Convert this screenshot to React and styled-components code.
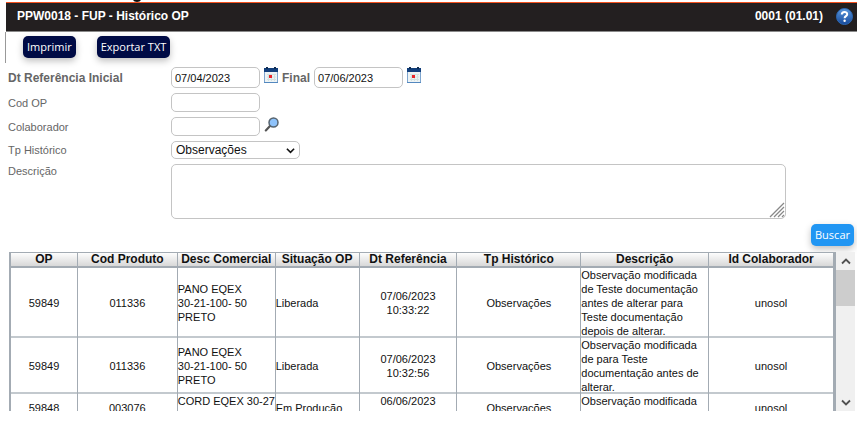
import React, { useRef } from "react";
import styled, { createGlobalStyle } from "styled-components";

const GlobalStyle = createGlobalStyle`
  * { box-sizing: border-box; }
  body {
    margin: 0;
    background: #fff;
    color: #111;
    font: 11px/14px "Liberation Sans", Arial, sans-serif;
  }
`;

const Page = styled.main`
  padding: 2px 0 12px 5px;
`;

const HeadingTail = styled.svg`
  position: absolute;
  top: 0;
  left: 132px;
`;

const TitleBar = styled.header`
  display: flex;
  align-items: center;
  gap: 13px;
  height: 30px;
  margin-left: 1px;
  padding: 0 4px 2px 11px;
  background: #231f20;
  border-top: 1px solid #f4511e;
  border-bottom: 1px solid #8a8a8a;
  color: #fff;
`;

const Title = styled.h1`
  flex: 1;
  margin: 0;
  font-size: 12px;
  line-height: 14px;
`;

const Version = styled.span`
  font-size: 12px;
  font-weight: bold;
`;

const IconButton = styled.button`
  display: flex;
  padding: 0;
  border: 0;
  background: none;
  cursor: pointer;
`;

const Toolbar = styled.div`
  display: flex;
  gap: 21px;
  height: 31px;
  padding: 4px 17px 0;
  border-left: 1px solid #999;
`;

const Button = styled.button`
  height: 22px;
  padding: 0 4px;
  border: 0;
  border-radius: 5px;
  background: ${(p) => (p.$primary ? "#2196f3" : "#000b45")};
  color: #fff;
  font: 11px/16px "Open Sans", sans-serif;
  box-shadow: 0 3px 7px rgba(0, 0, 0, 0.25);
  cursor: pointer;
`;

const Form = styled.form`
  display: grid;
  gap: 5px;
  padding: 4px 71px 0 3px;
`;

const Row = styled.div`
  display: grid;
  grid-template-columns: 163px 1fr;
  align-items: ${(p) => (p.$top ? "start" : "center")};
`;

const Label = styled.label`
  color: #666;
  font-size: ${(p) => (p.$strong ? 12 : 11)}px;
  font-weight: ${(p) => (p.$strong ? "bold" : "normal")};
`;

const Controls = styled.div`
  display: flex;
  align-items: center;
  gap: 4px;
  ${IconButton} { align-self: flex-start; }
`;

const Input = styled.input`
  width: 89px;
  height: ${(p) => (p.$tall ? 21 : 19)}px;
  padding: 1px 3px 0;
  border: 1px solid #c4c4c4;
  border-radius: 5px;
  background: #fff;
  color: #111;
  font: inherit;
`;

const SelectBox = styled.div`
  position: relative;
  svg {
    position: absolute;
    right: 5px;
    top: 6px;
    pointer-events: none;
  }
`;

const Select = styled.select`
  display: block;
  appearance: none;
  width: 129px;
  height: 18px;
  padding: 0 4px;
  border: 1px solid #c4c4c4;
  border-radius: 5px;
  background: #fff;
  color: #111;
  font: inherit;
  font-size: 12px;
`;

const TextBox = styled.div`
  position: relative;
  svg {
    position: absolute;
    right: 1px;
    bottom: 1px;
    pointer-events: none;
  }
`;

const TextArea = styled.textarea`
  display: block;
  width: 100%;
  height: 55px;
  padding: 3px;
  border: 1px solid #c4c4c4;
  border-radius: 5px;
  resize: none;
  font: inherit;
`;

const Actions = styled.div`
  display: flex;
  justify-content: flex-end;
  padding: 5px 3px 6px;
`;

const Grid = styled.section`
  display: flex;
  height: 159px;
  margin: 0 2px 0 4px;
`;

const Pane = styled.div`
  flex: 1;
  overflow: hidden;
  border: solid #a3abb3;
  border-width: 0 3px 0 2px;
`;

const Table = styled.table`
  width: 100%;
  table-layout: fixed;
  border-collapse: separate;
  border-spacing: 0;
`;

const Th = styled.th`
  height: 16px;
  padding: 0;
  border: solid #a3abb3;
  border-width: 1px 1px 2px 0;
  background: linear-gradient(#fdfdfd, #d8d8d8);
  font-size: 12px;
  line-height: 13px;
  white-space: nowrap;
  &:last-child { border-right: 0; }
`;

const Td = styled.td`
  padding: 0;
  border-right: 1px solid #a3abb3;
  box-shadow: inset 0 -2px #c3c9ce;
  text-align: ${(p) => (p.$left ? "left" : "center")};
  vertical-align: middle;
  white-space: ${(p) => (p.$wrap ? "pre-line" : "pre")};
  &:last-child { border-right: 0; }
`;

const ScrollBar = styled.div`
  display: flex;
  flex-direction: column;
  width: 19px;
  background: #f0f0f0;
`;

const Arrow = styled(IconButton)`
  height: 18px;
  align-items: center;
  justify-content: center;
`;

const Track = styled.div`
  flex: 1;
`;

const Thumb = styled.div`
  height: 36px;
  background: #cdcdcd;
`;

const HelpIcon = () => (
  <svg width="17" height="17" viewBox="0 0 17 17" aria-hidden="true">
    <defs>
      <linearGradient id="help" x2="0" y2="1">
        <stop stopColor="#5a97dc" />
        <stop offset="1" stopColor="#164a9c" />
      </linearGradient>
    </defs>
    <circle cx="8.5" cy="8.5" r="8" fill="url(#help)" stroke="#2c68b4" />
    <path d="M5.8 6.6C5.8 3 11.2 3.2 11.2 6.2C11.2 8.2 8.6 8.1 8.6 10.2" fill="none" stroke="#fff" strokeWidth="2" />
    <circle cx="8.6" cy="12.7" r="1.2" fill="#fff" />
  </svg>
);

const CalendarIcon = () => (
  <svg width="14" height="16" viewBox="0 0 14 16" aria-hidden="true">
    <rect x=".5" y="2.5" width="13" height="13" fill="#edf3f5" stroke="#7fa6cf" />
    <path d="M0 1h14v4H0z" fill="#123f7c" />
    <path d="M2 0h2v2H2zM10 0h2v2h-2z" fill="#102c50" />
    <path d="M3 7.5h9M3 10h9M3 12.5h9M4.5 7v7M7.5 7v7M10.5 7v7" stroke="#d3e2e0" />
    <path d="M0 15.5h14" stroke="#5388bf" />
    <rect x="5" y="8" width="3" height="3" fill="#e8262a" />
  </svg>
);

const SearchIcon = () => (
  <svg width="15" height="15" viewBox="0 0 15 15" aria-hidden="true">
    <path d="M1.8 13.4L6 9" stroke="#555" strokeWidth="2.2" strokeLinecap="round" />
    <circle cx="9.5" cy="5.5" r="4.5" fill="#8fc3fb" stroke="#56636e" strokeWidth="1.5" />
  </svg>
);

const Chevron = ({ up, size = 10, color = "#505050" }) => (
  <svg width={size} height="7" viewBox="0 0 10 7" aria-hidden="true">
    <path d={up ? "M1 5.5L5 1.5L9 5.5" : "M1 1.5L5 5.5L9 1.5"} fill="none" stroke={color} strokeWidth="1.8" />
  </svg>
);

const columns = [
  ["OP", 67],
  ["Cod Produto", 100],
  ["Desc Comercial", 98],
  ["Situação OP", 84],
  ["Dt Referência", 98],
  ["Tp Histórico", 124],
  ["Descrição", 128],
  ["Id Colaborador", 124],
];
const total = columns.reduce((sum, [, w]) => sum + w, 0);

const records = [
  ["59849", "011336", "PANO EQEX\n30-21-100- 50\nPRETO", "Liberada", "07/06/2023\n10:33:22", "Observações",
    "Observação modificada de Teste documentação antes de alterar para Teste documentação depois de alterar.", "unosol"],
  ["59849", "011336", "PANO EQEX\n30-21-100- 50\nPRETO", "Liberada", "07/06/2023\n10:32:56", "Observações",
    "Observação modificada\nde para Teste documentação antes de alterar.", "unosol"],
  ["59848", "003076", "CORD EQEX 30-27\n ", "Em Produção", "06/06/2023\n ", "Observações",
    "Observação modificada\n\u00a0", "unosol"],
];
const leftAligned = [2, 3, 6];

export default function App() {
  const pane = useRef(null);
  const scroll = (top) => pane.current.scrollBy({ top });

  return (
    <Page>
      <GlobalStyle />
      <HeadingTail width="10" height="2" aria-hidden="true">
        <path d="M1 0H9Q8 2 5 2Q2 2 1 0Z" fill="#111" />
      </HeadingTail>
      <TitleBar>
        <Title>PPW0018 - FUP - Histórico OP</Title>
        <Version>0001 (01.01)</Version>
        <IconButton aria-label="Ajuda"><HelpIcon /></IconButton>
      </TitleBar>
      <Toolbar>
        <Button>Imprimir</Button>
        <Button>Exportar TXT</Button>
      </Toolbar>
      <Form id="filtro" onSubmit={(e) => e.preventDefault()}>
        <Row>
          <Label $strong htmlFor="inicial">Dt Referência Inicial</Label>
          <Controls>
            <Input $tall id="inicial" defaultValue="07/04/2023" />
            <IconButton type="button" aria-label="Escolher data inicial"><CalendarIcon /></IconButton>
            <Label $strong htmlFor="final">Final</Label>
            <Input $tall id="final" defaultValue="07/06/2023" />
            <IconButton type="button" aria-label="Escolher data final"><CalendarIcon /></IconButton>
          </Controls>
        </Row>
        <Row>
          <Label htmlFor="op">Cod OP</Label>
          <Controls><Input id="op" /></Controls>
        </Row>
        <Row>
          <Label htmlFor="colaborador">Colaborador</Label>
          <Controls>
            <Input id="colaborador" />
            <IconButton type="button" aria-label="Pesquisar colaborador"><SearchIcon /></IconButton>
          </Controls>
        </Row>
        <Row>
          <Label htmlFor="tipo">Tp Histórico</Label>
          <Controls>
            <SelectBox>
              <Select id="tipo"><option>Observações</option></Select>
              <Chevron size={9} color="#111" />
            </SelectBox>
          </Controls>
        </Row>
        <Row $top>
          <Label htmlFor="descricao">Descrição</Label>
          <TextBox>
            <TextArea id="descricao" />
            <svg width="16" height="16" viewBox="0 0 16 16" aria-hidden="true">
              <path d="M1 15L15 1M5 15L15 5M9 15L15 9M13 15L15 13" stroke="#888" strokeWidth="1.3" />
            </svg>
          </TextBox>
        </Row>
      </Form>
      <Actions><Button $primary form="filtro">Buscar</Button></Actions>
      <Grid>
        <Pane ref={pane}>
          <Table>
            <colgroup>
              {columns.map(([name, w]) => <col key={name} style={{ width: `${(w / total) * 100}%` }} />)}
            </colgroup>
            <thead>
              <tr>{columns.map(([name]) => <Th key={name} scope="col">{name}</Th>)}</tr>
            </thead>
            <tbody>
              {records.map((cells, r) => (
                <tr key={r}>
                  {cells.map((text, c) => (
                    <Td key={c} $left={leftAligned.includes(c)} $wrap={c === 6}>{text}</Td>
                  ))}
                </tr>
              ))}
            </tbody>
          </Table>
        </Pane>
        <ScrollBar>
          <Arrow aria-label="Rolar para cima" onClick={() => scroll(-40)}><Chevron up /></Arrow>
          <Track><Thumb /></Track>
          <Arrow aria-label="Rolar para baixo" onClick={() => scroll(40)}><Chevron /></Arrow>
        </ScrollBar>
      </Grid>
    </Page>
  );
}
